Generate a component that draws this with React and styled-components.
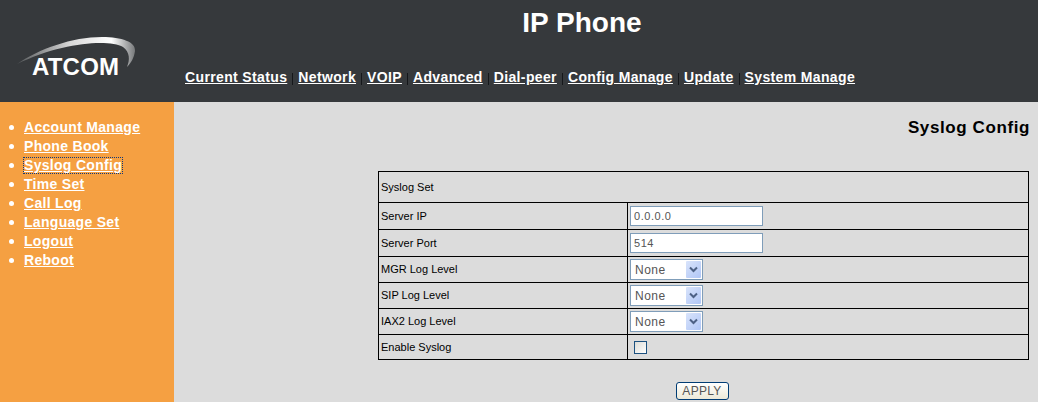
import React from "react";
import styled, { createGlobalStyle } from "styled-components";

const Global = createGlobalStyle`
  html, body { margin: 0; padding: 0; background: #dcdcdc; }
  body { width: 1038px; height: 402px; overflow: hidden; font-family: "Liberation Sans", Arial, sans-serif; }
`;
const Page = styled.div`display: flex; flex-direction: column; width: 1038px; height: 402px; overflow: hidden;`;
const Header = styled.header`display: flex; height: 102px; background: #36393c; flex: none;`;
const LogoCell = styled.div`width: 174px; flex: none; padding: 36px 0 0 17px; box-sizing: border-box;`;
const LogoMark = styled.div`position: relative; width: 120px; height: 42px;`;
const Swoosh = styled.svg`position: absolute; left: 0; top: 0; width: 120px; height: 36px;`;
const LogoText = styled.div`
  position: absolute; left: 15px; top: 19px; color: #fff; font: bold 24px/24px "Liberation Sans", Arial, sans-serif; letter-spacing: 0.2px;
`;
const HeaderMain = styled.div`flex: 1; display: flex; flex-direction: column; padding-right: 48px;`;
const Title = styled.h1`
  margin: 0; padding-top: 7px; text-align: center; color: #fff; font: bold 28px/31px "Liberation Sans", Arial, sans-serif;
`;
const Nav = styled.nav`display: flex; align-items: center; margin: 31px 0 0 11px; white-space: nowrap;`;
const NavLink = styled.a`color: #fff; font: bold 14px/16px "Liberation Sans", sans-serif; text-decoration: underline; letter-spacing: 0.36px;`;
const Sep = styled.span`display: inline-block; width: 1px; height: 12px; background: #15171a; margin: 3px 5px 0 5px;`;
const Body = styled.div`flex: 1; display: flex; min-height: 0;`;
const Side = styled.aside`width: 174px; flex: none; background: #f5a042; box-sizing: border-box; padding-top: 16px;`;
const Menu = styled.ul`list-style: none; margin: 0; padding: 0 0 0 9px;`;
const MenuItem = styled.li`display: flex; align-items: center; height: 19px; color: #fff;`;
const Dot = styled.span`width: 5px; height: 5px; border-radius: 50%; background: #fff; margin-right: 10px; flex: none;`;
const MenuLink = styled.a`
  color: #fff; font: bold 14px/15px "Liberation Sans", sans-serif; text-decoration: underline; letter-spacing: 0.3px;
  outline: ${p => (p.$focus ? "1px dotted #123a7a" : "none")};
`;
const Main = styled.main`flex: 1; display: flex; flex-direction: column; background: #dcdcdc; padding: 0 9px 0 204px; min-width: 0;`;
const PageTitle = styled.h2`margin: 0 -1px 0 0; padding-top: 16px; height: 69px; box-sizing: border-box; text-align: right; color: #000; font: bold 17px/20px "Liberation Sans", Arial, sans-serif; letter-spacing: 0.6px;`;
const Grid = styled.table`width: 651px; border-collapse: collapse; table-layout: fixed; border: 1px solid #000; color: #000; font: 11px/13px "Liberation Sans", Arial, sans-serif;`;
const LabelCol = styled.col`width: 249px;`;
const Row = styled.tr`height: ${p => p.$h}px;`;
const Cell = styled.td`border: 1px solid #000; padding: 0 0 0 2px; vertical-align: middle; box-sizing: border-box;`;
const TextField = styled.input`
  display: block; box-sizing: border-box; width: 133px; height: 20px; margin-left: 0; padding: 0 3px; border: 1px solid #7f9db9; background: #fff;
  color: #555; font: 11px "Liberation Sans", Arial, sans-serif; letter-spacing: 0.55px; outline: none;
`;
const SelectBox = styled.div`
  position: relative; box-sizing: border-box; width: 73px; height: 21px; margin-left: 0; border: 1px solid #7f9db9; background: #fff;
`;
const NativeSelect = styled.select`
  appearance: none; display: block; width: 100%; height: 100%; border: 0; background: transparent; padding: 0 0 0 4px; margin: 0;
  color: #555; font: 12px "Liberation Sans", Arial, sans-serif; letter-spacing: 0.5px; outline: none;
`;
const Arrow = styled.span`
  position: absolute; right: 1px; top: 1px; bottom: 1px; width: 15px; border-radius: 1px; background: linear-gradient(135deg, #d9e4fb, #b0c6f6);
  display: flex; align-items: center; justify-content: center; pointer-events: none;
`;
const Check = styled.input`
  appearance: none; display: block; box-sizing: border-box; width: 13px; height: 13px; margin: 0 0 0 4px; border: 1px solid #1c5180; background: linear-gradient(135deg, #dcdcd7, #fff);
`;
const Actions = styled.div`display: flex; justify-content: center; padding-top: 22px; margin-left: -3px;`;
const Apply = styled.button`
  box-sizing: border-box; width: 53px; height: 18px; padding: 0; border: 1px solid #003c74; border-radius: 3px; background: linear-gradient(#fff, #ece9d8);
  color: #555; font: 12px "Liberation Sans", Arial, sans-serif; letter-spacing: 0.3px;
`;

const topNav = ["Current Status", "Network", "VOIP", "Advanced", "Dial-peer", "Config Manage", "Update", "System Manage"];
const side = ["Account Manage", "Phone Book", "Syslog Config", "Time Set", "Call Log", "Language Set", "Logout", "Reboot"];

function LevelSelect() {
  return (
    <SelectBox>
      <NativeSelect defaultValue="None"><option>None</option></NativeSelect>
      <Arrow>
        <svg width="9" height="7" viewBox="0 0 9 7"><path d="M1 1.5 L4.5 5 L8 1.5" fill="none" stroke="#4d6185" strokeWidth="2" /></svg>
      </Arrow>
    </SelectBox>
  );
}

export default function App() {
  return (
    <Page>
      <Global />
      <Header>
        <LogoCell>
          <LogoMark>
            <Swoosh viewBox="0 0 120 36">
              <defs>
                <linearGradient id="sw" x1="0" x2="1" y1="0" y2="0">
                  <stop offset="0" stopColor="#55585a" />
                  <stop offset="0.45" stopColor="#d8d8d8" />
                  <stop offset="0.8" stopColor="#ffffff" />
                  <stop offset="1" stopColor="#77797b" />
                </linearGradient>
              </defs>
              <path d="M0 28 C22 13 55 1 85 1 C105 1 119 6 118 15 C117 22 114 27 110 31 C113 24 113 16 106 11 C92 3 45 6 0 28 Z" fill="url(#sw)" />
            </Swoosh>
            <LogoText>ATCOM</LogoText>
          </LogoMark>
        </LogoCell>
        <HeaderMain>
          <Title>IP Phone</Title>
          <Nav>
            {topNav.map((t, i) => (
              <React.Fragment key={t}>
                {i > 0 && <Sep />}
                <NavLink href="#">{t}</NavLink>
              </React.Fragment>
            ))}
          </Nav>
        </HeaderMain>
      </Header>
      <Body>
        <Side>
          <Menu>
            {side.map(t => (
              <MenuItem key={t}>
                <Dot />
                <MenuLink href="#" $focus={t === "Syslog Config"}>{t}</MenuLink>
              </MenuItem>
            ))}
          </Menu>
        </Side>
        <Main>
          <PageTitle>Syslog Config</PageTitle>
          <Grid>
            <colgroup><LabelCol /><col /></colgroup>
            <tbody>
              <Row $h={31}><Cell colSpan={2}>Syslog Set</Cell></Row>
              <Row $h={27}><Cell>Server IP</Cell><Cell><TextField readOnly value="0.0.0.0" /></Cell></Row>
              <Row $h={27}><Cell>Server Port</Cell><Cell><TextField readOnly value="514" /></Cell></Row>
              <Row $h={26}><Cell>MGR Log Level</Cell><Cell><LevelSelect /></Cell></Row>
              <Row $h={26}><Cell>SIP Log Level</Cell><Cell><LevelSelect /></Cell></Row>
              <Row $h={26}><Cell>IAX2 Log Level</Cell><Cell><LevelSelect /></Cell></Row>
              <Row $h={25}><Cell>Enable Syslog</Cell><Cell><Check type="checkbox" /></Cell></Row>
            </tbody>
          </Grid>
          <Actions><Apply>APPLY</Apply></Actions>
        </Main>
      </Body>
    </Page>
  );
}
